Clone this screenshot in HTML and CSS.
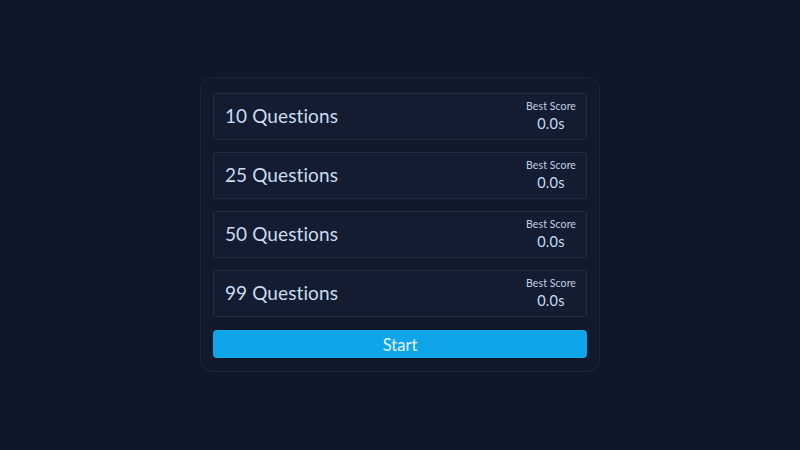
FILE: index.html
```html
<!DOCTYPE html>
<html>
<head>
<meta charset="utf-8">
<link rel="stylesheet" href="styles.css">
</head>
<body>
<main class="page">
  <section class="card">
    <div class="option">
      <span class="option-title">10 Questions</span>
      <div class="score">
        <span class="score-label">Best Score</span>
        <span class="score-value">0.0s</span>
      </div>
    </div>
    <div class="option">
      <span class="option-title">25 Questions</span>
      <div class="score">
        <span class="score-label">Best Score</span>
        <span class="score-value">0.0s</span>
      </div>
    </div>
    <div class="option">
      <span class="option-title">50 Questions</span>
      <div class="score">
        <span class="score-label">Best Score</span>
        <span class="score-value">0.0s</span>
      </div>
    </div>
    <div class="option">
      <span class="option-title">99 Questions</span>
      <div class="score">
        <span class="score-label">Best Score</span>
        <span class="score-value">0.0s</span>
      </div>
    </div>
    <button class="start">Start</button>
  </section>
</main>
</body>
</html>
```
FILE: styles.css
```css
* { box-sizing: border-box; }
html, body {
  margin: 0;
  padding: 0;
  background: #0f172a;
  font-family: "Lato", "Noto Sans", sans-serif;
}
.page {
  width: 800px;
  height: 450px;
  display: flex;
  justify-content: center;
  padding-top: 77px;
}
.card {
  width: 400px;
  height: 295px;
  background: #111a2d;
  border: 1px solid #1c2538;
  border-radius: 12px;
  padding: 15px 12px 13px;
  display: flex;
  flex-direction: column;
  gap: 12px;
}
.option {
  height: 47px;
  background: #131c31;
  border: 1px solid #232d42;
  border-radius: 3px;
  display: flex;
  align-items: center;
  justify-content: space-between;
  padding: 0 10px 0 11px;
}
.option-title {
  font-size: 19px;
  line-height: 24px;
  margin-top: -1px;
  color: #c9dcf2;
  letter-spacing: 0.1px;
}
.score {
  display: flex;
  flex-direction: column;
  align-items: center;
  margin-top: -2px;
}
.score-label {
  font-size: 10.5px;
  line-height: 16px;
  color: #c3d0e0;
  letter-spacing: 0.1px;
}
.score-value {
  font-size: 14.5px;
  line-height: 20px;
  color: #c9dcf2;
  letter-spacing: 0.3px;
}
.start {
  margin-top: 1px;
  height: 28px;
  border: none;
  border-radius: 4px;
  background: #0ea5e9;
  color: #e3f1fc;
  font-family: "Lato", "Noto Sans", sans-serif;
  font-size: 16.5px;
  padding: 1px 0 0;
}
```
